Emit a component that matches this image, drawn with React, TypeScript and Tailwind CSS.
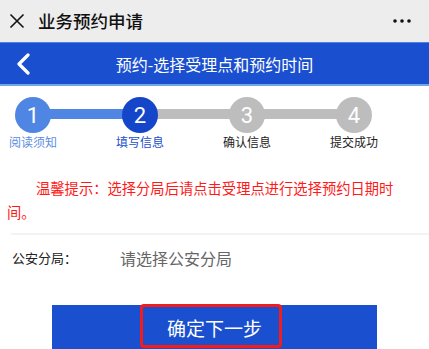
const steps = [
  { n: "1", label: "阅读须知", circle: "bg-[#4f86e3]", text: "text-[#5a8de2]" },
  { n: "2", label: "填写信息", circle: "bg-[#1546c9]", text: "text-[#1b4fca]" },
  { n: "3", label: "确认信息", circle: "bg-[#bdbdbd]", text: "text-[#222222]" },
  { n: "4", label: "提交成功", circle: "bg-[#bdbdbd]", text: "text-[#222222]" },
];

const font = "font-['Noto_Sans_CJK_SC',sans-serif]";

export default function App() {
  return (
    <div className={`w-[429px] h-[349px] overflow-hidden bg-white ${font}`}>
      {/* wechat top bar */}
      <div className="h-[42px] bg-[#ededed] flex items-center">
        <svg width="16" height="16" viewBox="0 0 16 16" className="ml-[9px]">
          <path d="M1.5 1.5l13 13M14.5 1.5l-13 13" stroke="#111" strokeWidth="1.6" />
        </svg>
        <span className="ml-[13px] text-[17.5px] text-[#111] font-medium">业务预约申请</span>
        <svg width="20" height="6" viewBox="0 0 20 6" className="ml-auto mr-[17px]">
          <circle cx="3" cy="3" r="1.8" fill="#111" />
          <circle cx="10" cy="3" r="1.8" fill="#111" />
          <circle cx="17" cy="3" r="1.8" fill="#111" />
        </svg>
      </div>

      {/* blue title bar */}
      <div className="h-[44px] bg-[#1a4fcf] border-t border-[#4a83e6] border-b-2 border-b-[#6ea8e8] flex items-center relative">
        <svg width="20" height="22" viewBox="0 0 20 22" className="ml-[14px]">
          <path d="M14 2L5 11l9 9" stroke="#fff" strokeWidth="3.2" fill="none" strokeLinecap="round" strokeLinejoin="round" />
        </svg>
        <span className="absolute left-0 right-0 text-center text-white text-[16px]">预约-选择受理点和预约时间</span>
      </div>

      {/* steps */}
      <div className="relative pt-[11px] pl-[3px]">
        <div className="absolute top-[23px] left-[33px] w-[107px] h-[10px] bg-[#5086e3]" />
        <div className="absolute top-[23px] left-[140px] w-[214px] h-[10px] bg-[#bdbdbd]" />
        <div className="relative flex gap-[47px]">
          {steps.map((s) => (
            <div key={s.n} className="w-[60px] flex flex-col items-center">
              <div className={`w-[36px] h-[36px] rounded-full ${s.circle} flex items-center justify-center text-white text-[22px] font-['Roboto',sans-serif]`}>
                {s.n}
              </div>
              <div className={`mt-[1px] text-[12px] leading-[16px] whitespace-nowrap ${s.text}`}>{s.label}</div>
            </div>
          ))}
        </div>
      </div>

      {/* tip */}
      <p className="mt-[26px] pl-[7px] pr-[26px] text-[14.3px] leading-[24px] text-[#ff1a1a] indent-[29px]">
        温馨提示：选择分局后请点击受理点进行选择预约日期时间。
      </p>

      <div className="ml-[11px] mt-[9px] h-[2px] bg-[#f3f3f3]" />

      {/* form row */}
      <div className="h-[46px] flex items-center">
        <span className="ml-[12px] w-[108px] text-[13px] text-[#222]">公安分局：</span>
        <span className="text-[16px] text-[#666]">请选择公安分局</span>
      </div>

      {/* next button */}
      <div className="mt-[24px] ml-[52px] w-[325px] h-[46px] bg-[#1a4fcf] relative flex items-center justify-center">
        <span className="text-white text-[19px]">确定下一步</span>
        <div className="absolute left-[88px] top-[-1px] w-[142px] h-[44px] border-[3px] border-[#f21c1c] rounded-[4px]" />
      </div>
    </div>
  );
}
